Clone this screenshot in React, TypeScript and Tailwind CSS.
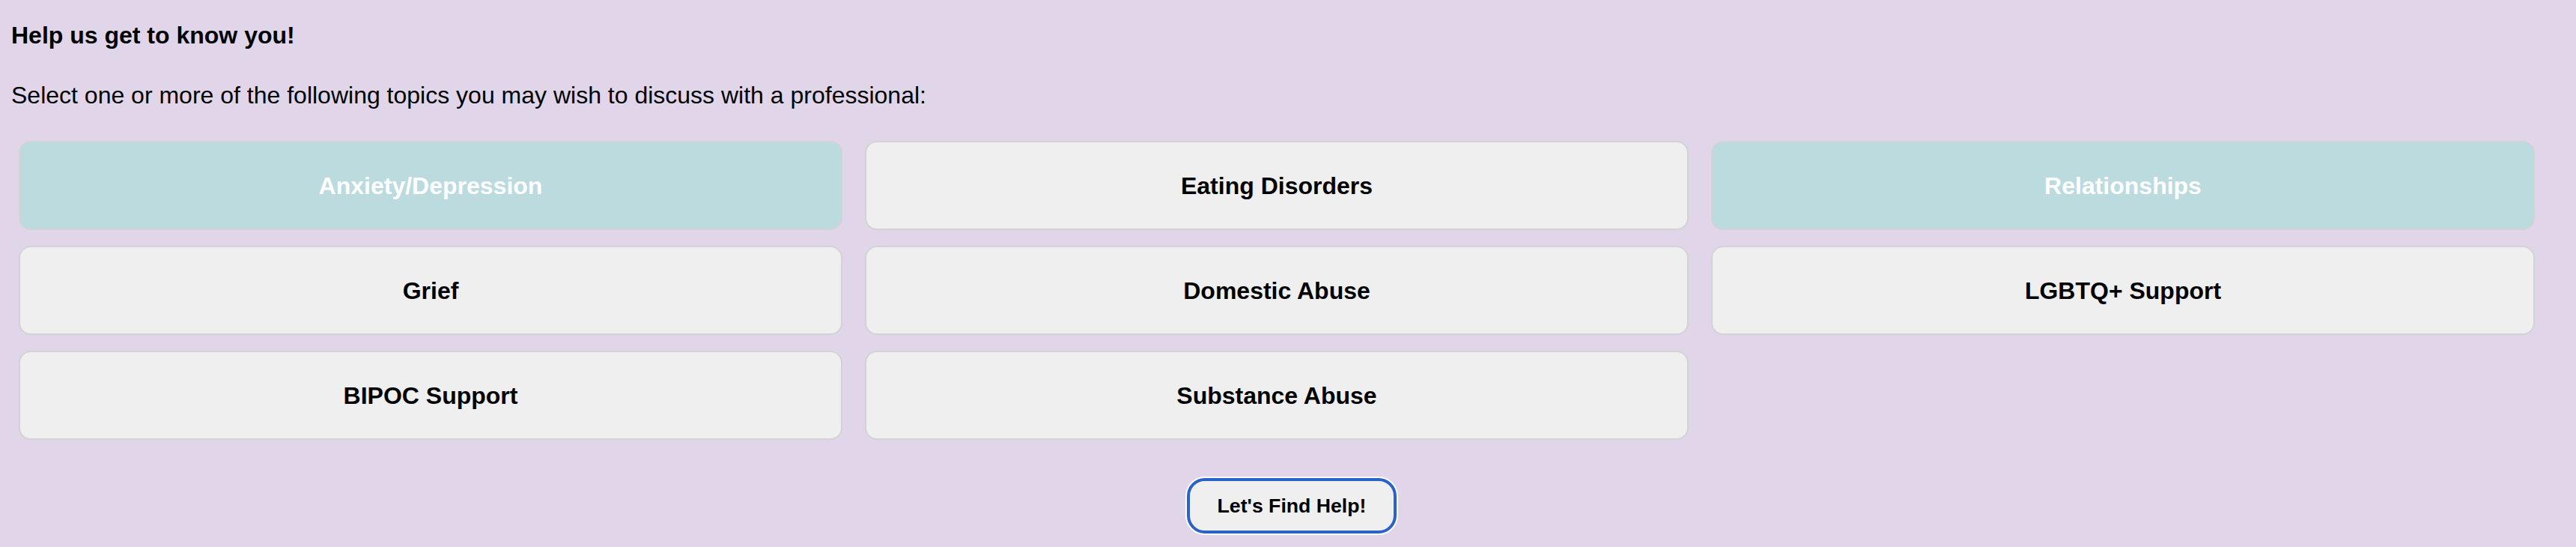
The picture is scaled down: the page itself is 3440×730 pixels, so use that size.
import React, { useState } from 'react';

const TOPICS = [
  'Anxiety/Depression',
  'Eating Disorders',
  'Relationships',
  'Grief',
  'Domestic Abuse',
  'LGBTQ+ Support',
  'BIPOC Support',
  'Substance Abuse',
];

export default function App() {
  const [selected, setSelected] = useState<string[]>(['Anxiety/Depression', 'Relationships']);

  const toggle = (topic: string) => {
    setSelected((prev) => (prev.includes(topic) ? prev.filter((t) => t !== topic) : [...prev, topic]));
  };

  return (
    <div className="min-h-[730px] w-full bg-[#e1d5ea] text-black font-['Liberation_Sans',Arial,sans-serif]">
      <div className="pt-[29px] pl-[15px]">
        <p className="text-[32px] leading-[37px] font-bold">Help us get to know you!</p>
        <p className="mt-[43px] text-[32px] leading-[37px]">
          Select one or more of the following topics you may wish to discuss with a professional:
        </p>
      </div>

      <div className="mt-[42px] ml-[25px] w-[3360px] grid grid-cols-3 gap-x-[30px] gap-y-[21px]">
        {TOPICS.map((topic) => {
          const isOn = selected.includes(topic);
          return (
            <button
              key={topic}
              onClick={() => toggle(topic)}
              className={
                isOn
                  ? 'h-[119px] rounded-[16px] border-2 border-[#d3d3d3] bg-[#bbdbdf] text-white text-[32px] font-bold'
                  : 'h-[119px] rounded-[16px] border-2 border-[#d3d3d3] bg-[#efefef] text-black text-[32px] font-bold'
              }
            >
              {topic}
            </button>
          );
        })}
      </div>

      <div className="mt-[51px] flex justify-center pl-[10px]">
        <button className="w-[280px] h-[74px] rounded-[24px] border-4 border-[#2b62c8] bg-[#efefef] text-[26.67px] font-bold shadow-[0_0_0_2px_#ffffff]">
          Let's Find Help!
        </button>
      </div>
    </div>
  );
}
